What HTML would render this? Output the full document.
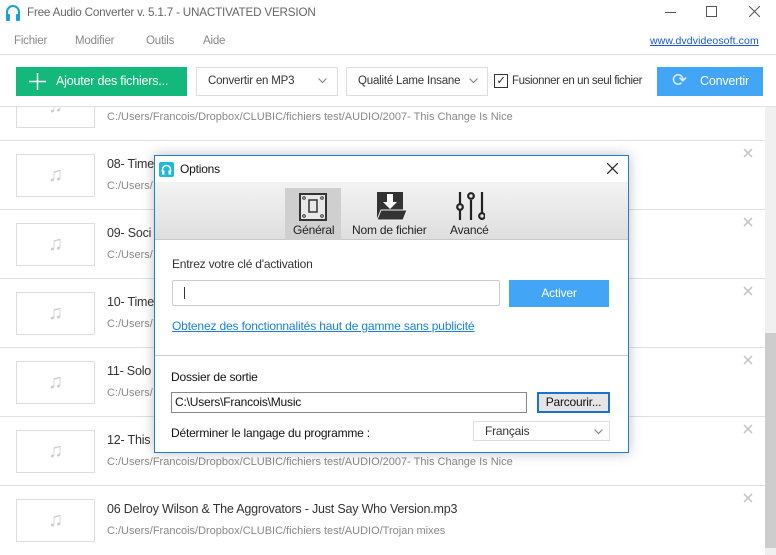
<!DOCTYPE html>
<html><head><meta charset="utf-8"><style>
*{box-sizing:border-box;margin:0;padding:0}
body{width:776px;height:555px;overflow:hidden;background:#fff;font-family:"Liberation Sans",sans-serif;position:relative;font-size:12px;color:#222;letter-spacing:-0.2px}
.abs{position:absolute;white-space:nowrap}
.row{position:absolute;left:0;width:765px;height:69px;border-bottom:1px solid #e0e0e0;background:#fff}
.thumb{position:absolute;left:16px;top:13px;width:79px;height:43px;border:1px solid #ddd;color:#ccc;font-size:20px;text-align:center;line-height:41px}
.t{position:absolute;left:107px;top:16px;font-size:12.5px;color:#333}
.p{position:absolute;left:107px;top:39px;font-size:11px;color:#888;letter-spacing:0}
.x{position:absolute;left:743px;top:7px}
</style></head><body>
<div class="row" style="top:72px"><div class="thumb">♫</div><div class="p">C:/Users/Francois/Dropbox/CLUBIC/fichiers test/AUDIO/2007- This Change Is Nice</div></div>
<div class="row" style="top:141px"><div class="thumb">♫</div><div class="t">08- Time</div><div class="p">C:/Users/</div><svg class="x" width="10" height="10"><path d="M1 1l8 8M9 1l-8 8" stroke="#c8c8c8" stroke-width="1.6"/></svg></div>
<div class="row" style="top:210px"><div class="thumb">♫</div><div class="t">09- Soci</div><div class="p">C:/Users/</div><svg class="x" width="10" height="10"><path d="M1 1l8 8M9 1l-8 8" stroke="#c8c8c8" stroke-width="1.6"/></svg></div>
<div class="row" style="top:279px"><div class="thumb">♫</div><div class="t">10- Time</div><div class="p">C:/Users/</div><svg class="x" width="10" height="10"><path d="M1 1l8 8M9 1l-8 8" stroke="#c8c8c8" stroke-width="1.6"/></svg></div>
<div class="row" style="top:348px"><div class="thumb">♫</div><div class="t">11- Solo</div><div class="p">C:/Users/</div><svg class="x" width="10" height="10"><path d="M1 1l8 8M9 1l-8 8" stroke="#c8c8c8" stroke-width="1.6"/></svg></div>
<div class="row" style="top:417px"><div class="thumb">♫</div><div class="t">12- This</div><div class="p">C:/Users/Francois/Dropbox/CLUBIC/fichiers test/AUDIO/2007- This Change Is Nice</div><svg class="x" width="10" height="10"><path d="M1 1l8 8M9 1l-8 8" stroke="#c8c8c8" stroke-width="1.6"/></svg></div>
<div class="row" style="top:486px;border-bottom:none"><div class="thumb">♫</div><div class="t">06 Delroy Wilson &amp; The Aggrovators - Just Say Who Version.mp3</div><div class="p">C:/Users/Francois/Dropbox/CLUBIC/fichiers test/AUDIO/Trojan mixes</div><svg class="x" width="10" height="10"><path d="M1 1l8 8M9 1l-8 8" stroke="#c8c8c8" stroke-width="1.6"/></svg></div>
<div class="abs" style="left:765px;top:107px;width:11px;height:448px;background:#f0f0f0"></div>
<div class="abs" style="left:765px;top:333px;width:11px;height:215px;background:#cdcdcd"></div>
<div class="abs" style="left:0;top:0;width:776px;height:107px;background:#fff;border-bottom:1px solid #e0e0e0"></div>
<svg class="abs" style="left:5px;top:4px" width="16" height="18" viewBox="0 0 16 18"><path d="M2 11V8a6 6 0 0 1 12 0v3" fill="none" stroke="#1aa0d8" stroke-width="2"/><rect x="1" y="10" width="4" height="7" rx="1" fill="#1aa0d8"/><rect x="11" y="10" width="4" height="7" rx="1" fill="#1aa0d8"/></svg>
<div class="abs" style="left:27px;top:6px;font-size:11.7px;color:#666">Free Audio Converter v. 5.1.7 - UNACTIVATED VERSION</div>
<div class="abs" style="left:665px;top:12px;width:11px;height:1px;background:#555"></div>
<div class="abs" style="left:706px;top:6px;width:11px;height:11px;border:1px solid #555"></div>
<svg class="abs" style="left:749px;top:6px" width="11" height="11"><path d="M0 0l11 11M11 0L0 11" stroke="#555" stroke-width="1"/></svg>
<div class="abs" style="left:14px;top:35px;font-size:11.5px;color:#888">Fichier</div>
<div class="abs" style="left:75px;top:35px;font-size:11.5px;color:#888">Modifier</div>
<div class="abs" style="left:146px;top:35px;font-size:11.5px;color:#888">Outils</div>
<div class="abs" style="left:203px;top:35px;font-size:11.5px;color:#888">Aide</div>
<div class="abs" style="left:650px;top:35px;font-size:10.5px;color:#1a55cc;text-decoration:underline;letter-spacing:0.1px">www.dvdvideosoft.com</div>
<div class="abs" style="left:0;top:54px;width:776px;height:1px;background:#ddd"></div>
<div class="abs" style="left:16px;top:67px;width:171px;height:29px;background:#13b97c;color:#fff;font-size:12.5px;line-height:29px;padding-left:40px">Ajouter des fichiers...</div>
<svg class="abs" style="left:29px;top:73px" width="17" height="17"><path d="M8.5 0v17M0 8.5h17" stroke="#fff" stroke-width="1.5"/></svg>
<div class="abs" style="left:196px;top:67px;width:142px;height:29px;border:1px solid #ddd;font-size:11.5px;line-height:27px;padding-left:11px;color:#333">Convertir en MP3</div>
<svg class="abs" style="left:318px;top:78px" width="9" height="6"><path d="M0.5 0.5l4 4 4-4" fill="none" stroke="#888" stroke-width="1.2"/></svg>
<div class="abs" style="left:346px;top:67px;width:142px;height:29px;border:1px solid #ddd;font-size:11.5px;line-height:27px;padding-left:11px;color:#333">Qualité Lame Insane</div>
<svg class="abs" style="left:469px;top:78px" width="9" height="6"><path d="M0.5 0.5l4 4 4-4" fill="none" stroke="#888" stroke-width="1.2"/></svg>
<div class="abs" style="left:494px;top:74px;width:14px;height:14px;border:1px solid #333;font-size:11px;line-height:12px;text-align:center">✓</div>
<div class="abs" style="left:512px;top:75px;font-size:11.5px;color:#333;letter-spacing:-0.4px">Fusionner en un seul fichier</div>
<div class="abs" style="left:657px;top:67px;width:106px;height:29px;background:#42a5f5;color:#fff;font-size:12.5px;line-height:29px;padding-left:43px">Convertir</div>
<div class="abs" style="left:672px;top:70px;color:#dceefe;font-size:18px">⟳</div>
<div class="abs" style="left:154px;top:155px;width:475px;height:298px;border:1px solid #1c7fd6;background:#fff;box-shadow:0 0 12px rgba(0,0,0,.25)">
 <div class="abs" style="left:4px;top:6px;width:15px;height:15px;background:#22b8d8;border-radius:2px"></div>
 <svg class="abs" style="left:6px;top:8px" width="11" height="11" viewBox="0 0 11 11"><path d="M1.5 8V5.5a4 4 0 0 1 8 0V8" fill="none" stroke="#fff" stroke-width="1.5"/><rect x="1" y="6.5" width="2.5" height="4" fill="#fff"/><rect x="7.5" y="6.5" width="2.5" height="4" fill="#fff"/></svg>
 <div class="abs" style="left:25px;top:6px;font-size:12px;color:#111">Options</div>
 <svg class="abs" style="left:452px;top:7px" width="11" height="11"><path d="M0 0l11 11M11 0L0 11" stroke="#222" stroke-width="1.2"/></svg>
 <div class="abs" style="left:0;top:26px;width:473px;height:58px;background:linear-gradient(#f3f3f3,#dedede);border-bottom:1px solid #c8c8c8"></div>
 <div class="abs" style="left:130px;top:32px;width:56px;height:52px;background:#cfcfcf"></div>
 <svg class="abs" style="left:143px;top:36px" width="30" height="30" viewBox="0 0 30 30"><rect x="2" y="2" width="26" height="26" fill="#e8e8e8" stroke="#333" stroke-width="2"/><rect x="11" y="8" width="8" height="12" fill="none" stroke="#333" stroke-width="1.5"/><circle cx="6" cy="6" r="1.3" fill="none" stroke="#333"/><circle cx="24" cy="6" r="1.3" fill="none" stroke="#333"/><circle cx="6" cy="24" r="1.3" fill="none" stroke="#333"/><circle cx="24" cy="24" r="1.3" fill="none" stroke="#333"/></svg>
 <div class="abs" style="left:138px;top:67px;font-size:12px;color:#222">Général</div>
 <svg class="abs" style="left:222px;top:36px" width="30" height="30" viewBox="0 0 30 30"><path d="M0 0h26v28H0z" fill="#333"/><path d="M10 2h6v8h4l-7 7-7-7h4z" fill="#fff"/><path d="M4 18h26l-4 10H0z" fill="#333" stroke="#f0f0f0" stroke-width="1"/></svg>
 <div class="abs" style="left:197px;top:67px;font-size:12px;color:#222">Nom de fichier</div>
 <svg class="abs" style="left:300px;top:35px" width="30" height="30" viewBox="0 0 30 30"><g stroke="#222" stroke-width="2.2" fill="none"><path d="M5 1v12M5 19v10M16 9v20M27 1v21M27 27v2"/><circle cx="5" cy="16" r="2.8"/><circle cx="16" cy="5" r="2.8"/><circle cx="27" cy="25" r="2.8"/></g></svg>
 <div class="abs" style="left:295px;top:67px;font-size:12px;color:#222">Avancé</div>
 <div class="abs" style="left:17px;top:101px;font-size:12px;color:#333">Entrez votre clé d'activation</div>
 <div class="abs" style="left:17px;top:124px;width:328px;height:26px;border:1px solid #ccc;border-radius:2px"></div>
 <div class="abs" style="left:29px;top:131px;width:1px;height:12px;background:#333"></div>
 <div class="abs" style="left:354px;top:124px;width:100px;height:27px;background:#42a5f5;color:#fff;font-size:12px;text-align:center;line-height:27px">Activer</div>
 <div class="abs" style="left:17px;top:163px;font-size:12px;color:#1a7fd8;text-decoration:underline;letter-spacing:-0.15px">Obtenez des fonctionnalités haut de gamme sans publicité</div>
 <div class="abs" style="left:0;top:199px;width:473px;height:1px;background:#ccc"></div>
 <div class="abs" style="left:16px;top:214px;font-size:12px;color:#111">Dossier de sortie</div>
 <div class="abs" style="left:16px;top:236px;width:356px;height:21px;border:1px solid #888;font-size:12px;line-height:19px;padding-left:3px;color:#111">C:\Users\Francois\Music</div>
 <div class="abs" style="left:382px;top:236px;width:73px;height:21px;border:2px solid #1c70d0;background:#e5e5e5;font-size:12px;line-height:17px;text-align:center;color:#111">Parcourir...</div>
 <div class="abs" style="left:16px;top:270px;font-size:12px;color:#111">Déterminer le langage du programme :</div>
 <div class="abs" style="left:318px;top:265px;width:137px;height:20px;border:1px solid #ddd;font-size:12px;line-height:18px;padding-left:11px;color:#333">Français</div>
 <svg class="abs" style="left:439px;top:273px" width="9" height="6"><path d="M0.5 0.5l4 4 4-4" fill="none" stroke="#888" stroke-width="1.2"/></svg>
</div>
</body></html>
